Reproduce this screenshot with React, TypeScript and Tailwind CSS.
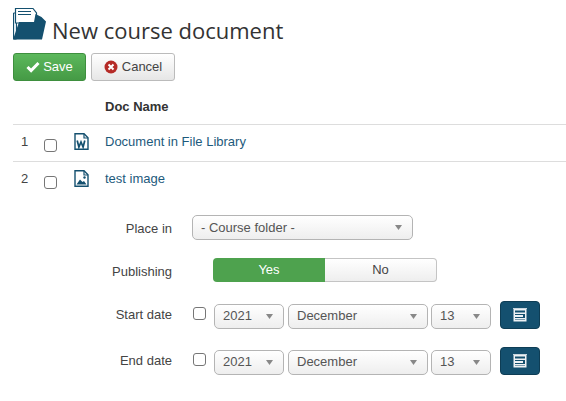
import React from "react";

const font = { fontFamily: "'Liberation Sans', Arial, sans-serif" };

function Sel({ w, label }: { w: string; label: string }) {
  return (
    <div
      className={`${w} h-[25px] flex items-center justify-between pl-[8px] pr-[10px] rounded-[5px] border border-[#b4b4b4] bg-gradient-to-b from-[#ffffff] to-[#eeeeee] text-[13px] text-[#555555]`}
    >
      <span>{label}</span>
      <svg width="7" height="5" viewBox="0 0 7 5"><path d="M0 0h7L3.5 5z" fill="#888888" /></svg>
    </div>
  );
}

function Cal() {
  return (
    <div className="w-[40px] h-[28px] ml-[9px] flex items-center justify-center rounded-[4px] bg-[#14506f] border border-[#0e3d55]">
      <svg width="14" height="14" viewBox="0 0 14 14">
        <rect x="0.5" y="0.5" width="13" height="13" fill="#eef2f5" />
        <rect x="0" y="0" width="14" height="1" fill="#c8d6de" />
        <rect x="2" y="2.5" width="10" height="2" fill="#14506f" />
        <rect x="2" y="6" width="10" height="1" fill="#14506f" />
        <rect x="10" y="6" width="2" height="4" fill="#14506f" />
        <rect x="2" y="9" width="8" height="1" fill="#14506f" />
        <rect x="2" y="11" width="10" height="1" fill="#7f9fb0" />
      </svg>
    </div>
  );
}

function DateRow({ label, mb }: { label: string; mb: string }) {
  return (
    <div className={`flex items-center ${mb}`}>
      <div className="w-[172px] text-right text-[13px] text-[#444444]">{label}</div>
      <div className="w-[13px] h-[13px] ml-[21px] mr-[8px] mb-[4px] rounded-[3px] border border-[#767676] bg-white" />
      <Sel w="w-[70px] mt-[2px]" label="2021" />
      <div className="w-[4px]" />
      <Sel w="w-[140px] mt-[2px]" label="December" />
      <div className="w-[3px]" />
      <Sel w="w-[60px] mt-[2px]" label="13" />
      <Cal />
    </div>
  );
}

function Row({ n, label, icon, border }: { n: string; label: string; icon: React.ReactNode; border: boolean }) {
  return (
    <div className={`flex h-[37px] items-center text-[13px] border-b ${border ? "border-[#dddddd]" : "border-transparent"}`}>
      <div className="w-[31px] pl-[8px] mb-[3px] text-[#444444]">{n}</div>
      <div className="w-[30px]">
        <div className="w-[13px] h-[13px] mt-[4px] rounded-[3px] border border-[#767676] bg-white" />
      </div>
      <div className="w-[31px]">{icon}</div>
      <div className="text-[#1d5a7c] mb-[3px]">{label}</div>
    </div>
  );
}

const WordIcon = (
  <svg width="15" height="17" viewBox="0 0 15 17" className="mb-[4px]">
    <path d="M1 .8h9l4 4v11.4H1z" fill="#fff" stroke="#14506f" strokeWidth="1.4" />
    <path d="M10 1v4h4" fill="none" stroke="#14506f" strokeWidth="1.2" />
    <path d="M3.2 7.5l1.7 6.5 2.1-5 2.1 5 1.7-6.5" fill="none" stroke="#14506f" strokeWidth="1.7" />
  </svg>
);

const ImageIcon = (
  <svg width="15" height="17" viewBox="0 0 15 17" className="mb-[4px]">
    <path d="M1 .8h9l4 4v11.4H1z" fill="#fff" stroke="#14506f" strokeWidth="1.4" />
    <path d="M10 1v4h4" fill="none" stroke="#14506f" strokeWidth="1.2" />
    <path d="M2.5 14.5l3.5-5 2.5 2.5 1.5-1 2.5 3.5z" fill="#14506f" />
    <circle cx="10.5" cy="7.5" r="1.2" fill="#14506f" />
  </svg>
);

export default function App() {
  return (
    <div className="w-[566px] h-[401px] bg-white overflow-hidden pl-[13px]" style={font}>
      <div className="flex items-end h-[44px]">
        <svg width="35" height="40" viewBox="0 0 35 40" className="mb-[3px] -ml-px">
          <path d="M1.5 12v26h3V12z" fill="#dfeaf1" stroke="#14506f" strokeWidth="1" />
          <path d="M3.5 7.5H21l3.5 4.5v10H3.5z" fill="#fff" stroke="#14506f" strokeWidth="1.2" />
          <path d="M6 10.5h13M6 13.5h13" stroke="#14506f" strokeWidth="1.2" />
          <path d="M7 21h15l1.5-8 6 3 4.5 4.5L30 38.5H1z" fill="#14506f" />
        </svg>
        <h1 className="ml-[5px] text-[22px] leading-[34px] font-medium text-[#333333] mb-[-3px]" style={{ fontFamily: "'Open Sans', sans-serif" }}>
          New course document
        </h1>
      </div>

      <div className="flex mt-[9px] gap-[5px] text-[13px]">
        <div className="w-[73px] h-[28px] flex items-center justify-center gap-[3px] rounded-[3px] border border-[#3e8f3e] bg-gradient-to-b from-[#5cb85c] to-[#459a45] text-white">
          <svg width="14" height="12" viewBox="0 0 14 12"><path d="M1.5 6l3.6 3.6L12.5 2" fill="none" stroke="#fff" strokeWidth="3" /></svg>
          <span>Save</span>
        </div>
        <div className="w-[84px] h-[28px] flex items-center justify-center gap-[4px] rounded-[3px] border border-[#bbbbbb] bg-gradient-to-b from-[#ffffff] to-[#e6e6e6] text-[#444444]">
          <svg width="14" height="14" viewBox="0 0 14 14">
            <circle cx="7" cy="7" r="6.5" fill="#b52b27" />
            <path d="M4.5 4.5l5 5M9.5 4.5l-5 5" stroke="#fff" strokeWidth="2" />
          </svg>
          <span>Cancel</span>
        </div>
      </div>

      <div className="mt-[8px]">
        <div className="flex h-[36px] items-center pl-[92px] text-[13px] font-bold text-[#333333] border-b border-[#dddddd]">
          Doc Name
        </div>
        <Row n="1" label="Document in File Library" icon={WordIcon} border />
        <Row n="2" label="test image" icon={ImageIcon} border={false} />
      </div>

      <div className="-ml-[13px] mt-[16px]">
        <div className="flex items-center mb-[18px]">
          <div className="w-[172px] pt-[2px] text-right text-[13px] text-[#444444]">Place in</div>
          <div className="w-[20px]" />
          <Sel w="w-[221px]" label="- Course folder -" />
        </div>
        <div className="flex items-center mb-[19px]">
          <div className="w-[172px] pt-[4px] text-right text-[13px] text-[#444444]">Publishing</div>
          <div className="w-[41px]" />
          <div className="w-[112px] h-[24px] flex items-center justify-center rounded-l-[4px] bg-[#4ea24e] text-white text-[13px]">Yes</div>
          <div className="w-[112px] h-[24px] flex items-center justify-center rounded-r-[4px] border border-l-0 border-[#c4c4c4] bg-gradient-to-b from-[#ffffff] to-[#eeeeee] text-[#444444] text-[13px]">No</div>
        </div>
        <DateRow label="Start date" mb="mb-[18px]" />
        <DateRow label="End date" mb="" />
      </div>
    </div>
  );
}
